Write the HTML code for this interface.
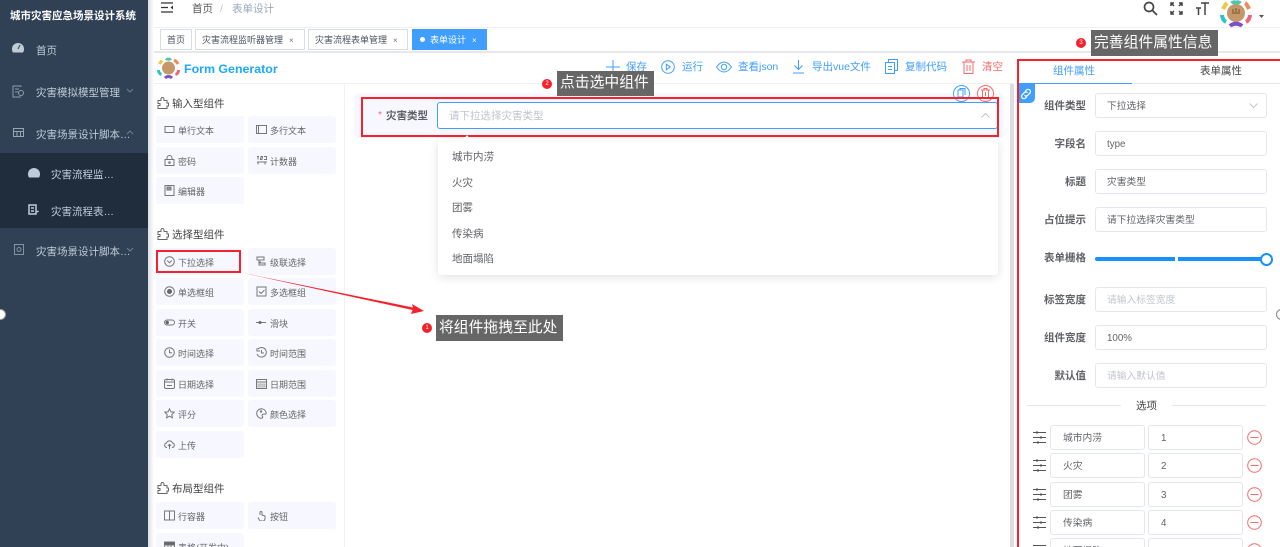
<!DOCTYPE html>
<html lang="zh">
<head>
<meta charset="utf-8">
<title>表单设计</title>
<style>
html,body{margin:0;padding:0;width:1280px;height:547px;overflow:hidden;background:#fff}
body{position:relative;font-family:"Liberation Sans","Noto Sans CJK SC",sans-serif;color:#606266}
.a,.t,svg.i{position:absolute}
.t{white-space:nowrap;line-height:16px;font-size:10.5px}
.m{color:#bfcbd9}
.it{position:absolute;width:88px;height:27px;background:#f6f7ff;border-radius:3px}
.it span{position:absolute;left:22px;top:7px;line-height:16px;font-size:9px;color:#666;white-space:nowrap}
.it svg{position:absolute;left:8px;top:8px}
.h{font-size:10.5px;color:#444}
.tag{position:absolute;top:29px;height:19px;border:1px solid #d8dce5;background:#fff;font-size:9px;line-height:21px;color:#495060;white-space:nowrap;box-sizing:content-box}
.inp{position:absolute;left:1095px;width:170px;height:23px;border:1px solid #e4e7ed;border-radius:3px;background:#fff;font-size:9.75px;line-height:25px;text-indent:11px;color:#606266;white-space:nowrap}
.ph{color:#c0c4cc}
.lab{position:absolute;width:70px;left:1016px;text-align:right;font-weight:bold;font-size:10.5px;line-height:16px;color:#606266}
.op{position:absolute;height:23px;border:1px solid #e4e7ed;border-radius:3px;font-size:9.75px;line-height:25px;text-indent:12px;color:#606266;background:#fff}
.tip{position:absolute;background:#666;color:#fff;font-size:14.8px;line-height:25px;height:25px;white-space:nowrap}
.dot{position:absolute;width:10px;height:10px;border-radius:50%;background:#f5222d;color:#fff;font-size:6px;line-height:10px;text-align:center}
.dd{position:absolute;left:452px;font-size:10.5px;line-height:16px;color:#606266}
svg{fill:none;stroke:#777;stroke-width:1}
.tb{color:#409eff;top:59px}
</style>
</head>
<body>
<!-- sidebar -->
<div class="a" style="left:0;top:0;width:148px;height:547px;background:#304156"></div>
<div class="a" style="left:0;top:153px;width:148px;height:75px;background:#1f2d3d"></div>
<div class="a" style="left:148px;top:0;width:6px;height:547px;background:linear-gradient(90deg,#dcdfe4,#fff)"></div>
<div class="t" style="left:10px;top:8px;color:#fff;font-weight:bold">城市灾害应急场景设计系统</div>
<svg class="i" style="left:12px;top:43px;stroke:none;fill:#bfcbd9" width="12" height="10" viewBox="0 0 12 10"><path d="M6 0a6 6 0 0 0-6 6c0 1.500.4 2.700 1 3.500h10c.6-.8 1-2 1-3.500a6 6 0 0 0-6-6z"/><path d="M6 6l2-4" stroke="#304156"/></svg>
<div class="t m" style="left:36px;top:43px">首页</div>
<svg class="i" style="left:12px;top:85px;stroke:#8f9cab" width="12" height="13" viewBox="0 0 12 13"><path d="M9 2V1H1v11h8M3 4h4M3 7h3"/><circle cx="9" cy="8" r="2.500"/></svg>
<div class="t m" style="left:36px;top:85px">灾害模拟模型管理</div>
<svg class="i" style="left:126px;top:88px;stroke:#6f7e90" width="8" height="5" viewBox="0 0 8 5"><path d="M1 1l3 3 3-3"/></svg>
<svg class="i" style="left:13px;top:128px;stroke:#98a5b4" width="11" height="9" viewBox="0 0 11 9"><path d="M.5.500h10v8H.5zM.5 3.500h10M4 3.500v5M7.500 3.500v5"/></svg>
<div class="t m" style="left:36px;top:127px">灾害场景设计脚本…</div>
<svg class="i" style="left:126px;top:130px;stroke:#6f7e90" width="8" height="5" viewBox="0 0 8 5"><path d="M1 4l3-3 3 3"/></svg>
<svg class="i" style="left:28px;top:168px;stroke:none;fill:#bfcbd9" width="12" height="10" viewBox="0 0 12 10"><path d="M6 0a6 6 0 0 0-6 6c0 1.500.4 2.700 1 3.500h10c.6-.8 1-2 1-3.500a6 6 0 0 0-6-6z"/></svg>
<div class="t m" style="left:51px;top:167px">灾害流程监…</div>
<svg class="i" style="left:28px;top:204px;stroke:#bfcbd9;stroke-width:1.500" width="11" height="12" viewBox="0 0 11 12"><path d="M1 1h7v9H1zM3 4h3M3 7h3M9 8l1.500-1"/></svg>
<div class="t m" style="left:51px;top:204px">灾害流程表…</div>
<svg class="i" style="left:14px;top:244px;stroke:#8492a3" width="10" height="11" viewBox="0 0 10 11"><path d="M.5.500h9v10h-9z"/><circle cx="5" cy="5.500" r="2"/></svg>
<div class="t m" style="left:36px;top:244px">灾害场景设计脚本…</div>
<svg class="i" style="left:126px;top:247px;stroke:#6f7e90" width="8" height="5" viewBox="0 0 8 5"><path d="M1 1l3 3 3-3"/></svg>
<div class="a" style="left:-5px;top:309px;width:9px;height:9px;border-radius:50%;background:#fff;border:1px solid #999"></div>

<!-- navbar -->
<svg class="i" style="left:161px;top:2px;stroke:#333;stroke-width:1.300" width="13" height="11" viewBox="0 0 13 11"><path d="M0 1h12M0 5.500h7M0 10h12"/><path d="M12 3.500v4L9.500 5.500z" fill="#333" stroke="none"/></svg>
<div class="t" style="left:192px;top:1px;color:#555">首页</div>
<div class="t" style="left:220px;top:1px;color:#c0c4cc">/</div>
<div class="t" style="left:232px;top:1px;color:#97a8be">表单设计</div>
<div class="a" style="left:154px;top:27px;width:1126px;height:1px;background:#eef0f3"></div>
<div class="a" style="left:154px;top:51px;width:1126px;height:2px;background:#e6e8ec"></div>
<div class="tag" style="left:160px;width:30px;text-align:center">首页</div>
<div class="tag" style="left:195px;width:108px;text-indent:6px">灾害流程监听器管理<span style="position:absolute;left:93px;font-size:8px;color:#777;text-indent:0">×</span></div>
<div class="tag" style="left:308px;width:98px;text-indent:6px">灾害流程表单管理<span style="position:absolute;left:84px;font-size:8px;color:#777;text-indent:0">×</span></div>
<div class="tag" style="left:412px;width:73px;background:#409eff;border-color:#409eff;color:#fff;text-indent:17px"><span style="position:absolute;left:7px;top:7px;width:5px;height:5px;border-radius:50%;background:#fff"></span>表单设计<span style="position:absolute;left:59px;font-size:8px;text-indent:0">×</span></div>

<svg class="i" style="left:1143px;top:1px;stroke:#444;stroke-width:1.700" width="15" height="15" viewBox="0 0 15 15"><circle cx="6" cy="6" r="4.500"/><path d="M9.500 9.500l4.500 4.500"/></svg>
<svg class="i" style="left:1170px;top:2px;stroke:#444;stroke-width:1.500" width="13" height="13" viewBox="0 0 13 13"><path d="M1 1l3 3M1 4V1h3M12 1L9 4M9 1h3v3M1 12l3-3M1 9v3h3M12 12L9 9M12 9v3H9"/></svg>
<svg class="i" style="left:1195px;top:2px;stroke:#444;stroke-width:1.500" width="15" height="13" viewBox="0 0 15 13"><path d="M6 1h8M10 1v12M1 6h5M3.500 6v7"/></svg>
<svg class="i" style="left:1220px;top:0;stroke-width:4" width="32" height="27" viewBox="0 0 32 27">
<circle cx="16" cy="13" r="9" fill="#c49868" stroke="none"/>
<path d="M12 1c1 2 7 2 8 0" stroke="#52c4a8"/>
<path d="M7 3C5 5 4 7 3 9" stroke="#f2c53d"/>
<path d="M25 3c2 1 3 4 4 6" stroke="#f08a5d"/>
<path d="M2 15c0 3 2 6 4 7" stroke="#2ec4c6"/>
<path d="M30 15c0 3-2 6-4 7" stroke="#ee6677"/>
<path d="M10 26c3-3 9-3 12 0" stroke="#7b52c8"/>
<path d="M12 13h8M13 9v3M16 8v4M19 9v3" stroke="#7a5230" stroke-width="1"/>
</svg>
<svg class="i" style="left:1259px;top:15px;stroke:none;fill:#555" width="6" height="4" viewBox="0 0 6 4"><path d="M0 0h5L2.500 3z"/></svg>

<!-- logo bar -->
<div class="a" style="left:154px;top:83px;width:860px;height:1px;background:#f0f1f4"></div>
<svg class="i" style="left:157px;top:57px;stroke-width:3" width="23" height="22" viewBox="0 0 23 22">
<circle cx="11.500" cy="11" r="6.500" fill="#c49868" stroke="none"/>
<path d="M9 1.500c1 1 4 1 5 0" stroke="#52c4a8"/>
<path d="M5 3.500C4 5 3 6 2.500 7" stroke="#f2c53d"/>
<path d="M17 3c2 1 3 2 4 4" stroke="#f08a5d"/>
<path d="M1.500 13c0 2 1 4 3 4.500" stroke="#2ec4c6"/>
<path d="M21.500 13c0 2-1 4-3 4.500" stroke="#ee6677"/>
<path d="M8 21c2-2 5-2 7 0" stroke="#7b52c8"/>
</svg>
<div class="t" style="left:184px;top:61px;font-size:12.4px;font-weight:bold;color:#1aa9fb">Form Generator</div>

<!-- toolbar -->
<svg class="i" style="left:606px;top:60px;stroke:#409eff" width="14" height="14" viewBox="0 0 14 14"><path d="M7 0v14M0 7h14"/></svg>
<div class="t tb" style="left:626px">保存</div>
<svg class="i" style="left:661px;top:60px;stroke:#409eff" width="14" height="14" viewBox="0 0 14 14"><circle cx="7" cy="7" r="6.300"/><path d="M5.300 4.200l4 2.800-4 2.800z"/></svg>
<div class="t tb" style="left:682px">运行</div>
<svg class="i" style="left:716px;top:60px;stroke:#409eff" width="16" height="14" viewBox="0 0 16 14"><path d="M.5 7C3 3.500 5.500 2 8 2s5 1.500 7.500 5c-2.500 3.500-5 5-7.500 5S3 10.500.5 7z"/><circle cx="8" cy="7" r="2.700"/></svg>
<div class="t tb" style="left:738px">查看json</div>
<svg class="i" style="left:792px;top:59px;stroke:#409eff" width="13" height="15" viewBox="0 0 13 15"><path d="M6.500 1v9M2.500 6.500l4 4 4-4M1 14h11"/></svg>
<div class="t tb" style="left:812px">导出vue文件</div>
<svg class="i" style="left:885px;top:59px;stroke:#409eff" width="13" height="15" viewBox="0 0 13 15"><path d="M.5 3.500h9v11h-9zM3.500 3.500V.5h9v11h-3M3 7.500h4M3 10.500h4"/></svg>
<div class="t tb" style="left:905px">复制代码</div>
<svg class="i" style="left:962px;top:59px;stroke:#f56c6c" width="13" height="15" viewBox="0 0 13 15"><path d="M0 3h13M4 3V1h5v2M2 3v11.500h9V3M5 6v6M8 6v6"/></svg>
<div class="t" style="left:982px;top:59px;color:#f56c6c">清空</div>

<!-- left panel -->
<div class="a" style="left:344px;top:84px;width:1px;height:463px;background:#f1f1f3"></div>
<svg class="i" style="left:157px;top:97px;stroke:#666" width="12" height="12" viewBox="0 0 12 12"><path d="M1 3.500h3V2a1.500 1.500 0 0 1 3 0v1.500h3V6h1.500v3H10v2.500H1V8.500h2v-2H1z"/></svg>
<div class="t h" style="left:172px;top:96px">输入型组件</div>
<svg class="i" style="left:157px;top:228px;stroke:#666" width="12" height="12" viewBox="0 0 12 12"><path d="M1 3.500h3V2a1.500 1.500 0 0 1 3 0v1.500h3V6h1.500v3H10v2.500H1V8.500h2v-2H1z"/></svg>
<div class="t h" style="left:172px;top:227px">选择型组件</div>
<svg class="i" style="left:157px;top:482px;stroke:#666" width="12" height="12" viewBox="0 0 12 12"><path d="M1 3.500h3V2a1.500 1.500 0 0 1 3 0v1.500h3V6h1.500v3H10v2.500H1V8.500h2v-2H1z"/></svg>
<div class="t h" style="left:172px;top:481px">布局型组件</div>

<div class="it" style="left:156px;top:116px"><svg width="11" height="11" viewBox="0 0 11 11"><path d="M1 2.500h9v6H1z"/></svg><span>单行文本</span></div>
<div class="it" style="left:248px;top:116px"><svg width="11" height="11" viewBox="0 0 11 11"><path d="M.5 1.500h10v8H.5zM2.500 1.500v8"/></svg><span>多行文本</span></div>
<div class="it" style="left:156px;top:147px"><svg width="11" height="11" viewBox="0 0 11 11"><path d="M1 4.500h9v6H1zM3 4.500V3a2.500 2.500 0 0 1 5 0v1.500"/><circle cx="5.500" cy="7.500" r=".8"/></svg><span>密码</span></div>
<div class="it" style="left:248px;top:147px"><svg width="11" height="11" viewBox="0 0 11 11"><path d="M1 1.500h2M2 1.500v3M4.500 1.500h2v1.500h-2v1.500h2M8 1.500h2.500V4.500H8M1 7h10M2 7v2.500M9 7v2.500"/></svg><span>计数器</span></div>
<div class="it" style="left:156px;top:177px"><svg width="11" height="11" viewBox="0 0 11 11"><path d="M1 .5h9v10H1z"/><path d="M3 2h4v3H3z" fill="#999"/></svg><span>编辑器</span></div>

<div class="it" style="left:156px;top:248px"><svg width="11" height="11" viewBox="0 0 11 11"><circle cx="5.500" cy="5.500" r="4.800"/><path d="M3.200 4.500l2.300 2.300 2.300-2.300"/></svg><span>下拉选择</span></div>
<div class="it" style="left:248px;top:248px"><svg width="11" height="11" viewBox="0 0 11 11"><path d="M1 1h7v3H1zM3 4v5h6v-2H3M3 6h2"/></svg><span>级联选择</span></div>
<div class="it" style="left:156px;top:278px"><svg width="11" height="11" viewBox="0 0 11 11"><circle cx="5.500" cy="5.500" r="4.800"/><circle cx="5.500" cy="5.500" r="2.500" fill="#666" stroke="none"/></svg><span>单选框组</span></div>
<div class="it" style="left:248px;top:278px"><svg width="11" height="11" viewBox="0 0 11 11"><path d="M1 1h9v9H1zM3 5.500l2 2 3.500-3.500"/></svg><span>多选框组</span></div>
<div class="it" style="left:156px;top:309px"><svg width="11" height="11" viewBox="0 0 11 11"><rect x=".5" y="3" width="10" height="5" rx="2.500"/><circle cx="3.200" cy="5.500" r="1.700" fill="#666" stroke="none"/></svg><span>开关</span></div>
<div class="it" style="left:248px;top:309px"><svg width="11" height="11" viewBox="0 0 11 11"><path d="M0 5.500h10"/><circle cx="4" cy="5.500" r="1.500" fill="#666" stroke="none"/></svg><span>滑块</span></div>
<div class="it" style="left:156px;top:339px"><svg width="11" height="11" viewBox="0 0 11 11"><circle cx="5.500" cy="5.500" r="4.800"/><path d="M5.500 2.500v3.300h2.500"/></svg><span>时间选择</span></div>
<div class="it" style="left:248px;top:339px"><svg width="11" height="11" viewBox="0 0 11 11"><path d="M2 2a4.800 4.800 0 1 1-1 5M1 1v3h3M5.500 3v3H8"/></svg><span>时间范围</span></div>
<div class="it" style="left:156px;top:370px"><svg width="11" height="11" viewBox="0 0 11 11"><rect x=".5" y="1.500" width="10" height="9" rx="1.500"/><path d="M.5 4h10M3 .5v2M8 .5v2M3 7.500h5"/></svg><span>日期选择</span></div>
<div class="it" style="left:248px;top:370px"><svg width="11" height="11" viewBox="0 0 11 11" stroke="#aaa"><path d="M.5 1.500h10v9H.5zM.5 4h10"/><path d="M2 6h7v3H2z" fill="#ccc" stroke="#bbb"/></svg><span>日期范围</span></div>
<div class="it" style="left:156px;top:400px"><svg width="11" height="11" viewBox="0 0 11 11"><path d="M5.500.8l1.400 3 3.300.4-2.400 2.300.6 3.300-2.900-1.600-2.900 1.600.6-3.300L.8 4.200l3.300-.4z"/></svg><span>评分</span></div>
<div class="it" style="left:248px;top:400px"><svg width="11" height="11" viewBox="0 0 11 11"><path d="M5.500.7a4.800 4.800 0 1 0 0 9.600c1.500 0 1.500-1.500.8-2.200-.8-1 0-2 1-2h2.200c.8 0 .8-1 .5-1.800A4.800 4.800 0 0 0 5.500.7z"/><circle cx="5" cy="3.500" r=".7"/></svg><span>颜色选择</span></div>
<div class="it" style="left:156px;top:431px"><svg width="11" height="11" viewBox="0 0 11 11"><path d="M3 8.500H2.500a2.300 2.300 0 0 1 0-4.500 3.200 3.200 0 0 1 6 0 2.300 2.300 0 0 1 0 4.500H8M5.500 10V5.500M3.800 7l1.700-1.700L7.200 7"/></svg><span>上传</span></div>
<div class="it" style="left:156px;top:502px"><svg width="11" height="11" viewBox="0 0 11 11"><path d="M.5 1h10v9H.5zM5.500 1v9"/></svg><span>行容器</span></div>
<div class="it" style="left:248px;top:502px"><svg width="11" height="11" viewBox="0 0 11 11" stroke="#888"><path d="M4 5V2.500a1 1 0 0 1 2 0V5l3 1v3l-1 2H4L2 7.500"/></svg><span>按钮</span></div>
<div class="it" style="left:156px;top:533px"><svg width="11" height="11" viewBox="0 0 11 11"><path d="M0 1h11v3H0z" fill="#666"/><path d="M.5 4v7M10.500 4v7M0 7h11M4 4v7M7 4v7"/></svg><span>表格(开发中)</span></div>

<!-- center -->
<div class="a" style="left:354px;top:93px;width:650px;height:45px;background:#f6f7ff;border-radius:5px"></div>
<div class="a" style="left:1010px;top:84px;width:4px;height:463px;background:#dcdde1"></div>
<div class="a" style="left:437px;top:102px;width:559px;height:25px;background:#fff;border:1px solid #409eff;border-radius:3px"></div>
<div class="t" style="left:378px;top:108px;color:#f56c6c;font-size:10px">*</div>
<div class="t" style="left:386px;top:108px;font-weight:bold">灾害类型</div>
<div class="t" style="left:449px;top:108px;color:#c0c4cc">请下拉选择灾害类型</div>
<svg class="i" style="left:981px;top:113px;stroke:#c0c4cc" width="9" height="5" viewBox="0 0 9 5"><path d="M.5 4.500l4-4 4 4"/></svg>
<div class="a" style="left:953px;top:85px;width:15px;height:15px;border:1px solid #409eff;border-radius:50%;background:#fff"></div>
<svg class="i" style="left:957px;top:88px;stroke:#409eff" width="9" height="10" viewBox="0 0 9 10"><path d="M1 2h5v7H1zM3 2V.5h5V7"/></svg>
<div class="a" style="left:977px;top:85px;width:15px;height:15px;border:1px solid #f56c6c;border-radius:50%;background:#fff"></div>
<svg class="i" style="left:981px;top:88px;stroke:#f56c6c" width="9" height="10" viewBox="0 0 9 10"><path d="M0 2h9M3 2V.5h3V2M1.500 2v7.500h6V2M4.500 4v4"/></svg>
<div class="a" style="left:361px;top:97px;width:634px;height:36px;border:2px solid #f5222d"></div>

<div class="a" style="left:438px;top:139px;width:560px;height:136px;background:#fff;border-radius:3px;box-shadow:0 2px 10px rgba(0,0,0,.12)"></div>
<div class="a" style="left:463px;top:135px;width:0;height:0;border:4px solid transparent;border-top:0;border-bottom:5px solid #fff"></div>
<div class="dd" style="top:149px">城市内涝</div>
<div class="dd" style="top:175px">火灾</div>
<div class="dd" style="top:200px">团雾</div>
<div class="dd" style="top:226px">传染病</div>
<div class="dd" style="top:251px">地面塌陷</div>

<!-- annotations -->
<div class="a" style="left:156px;top:250px;width:81px;height:19px;border:2px solid #f5222d"></div>
<svg class="i" style="left:240px;top:270px;stroke:none" width="190" height="45" viewBox="0 0 190 45"><path d="M3 3L173 37.500 172 34 184 41 171 44 172.500 40z" fill="#f5222d"/></svg>
<div class="dot" style="left:422px;top:323px">1</div>
<div class="tip" style="left:436px;top:315px;width:127px;height:26px;line-height:26px;text-indent:3px">将组件拖拽至此处</div>
<div class="dot" style="left:542px;top:79px">2</div>
<div class="tip" style="left:557px;top:71px;width:97px;text-indent:3px">点击选中组件</div>
<div class="dot" style="left:1076px;top:38px">3</div>
<div class="tip" style="left:1091px;top:30px;width:127px;height:26px;line-height:26px;text-indent:3px">完善组件属性信息</div>

<!-- right panel -->
<div class="t" style="left:1053px;top:63px;color:#409eff">组件属性</div>
<div class="t" style="left:1200px;top:63px;color:#444">表单属性</div>
<div class="a" style="left:1018px;top:83px;width:262px;height:1px;background:#e4e7ed"></div>
<div class="a" style="left:1018px;top:83px;width:114px;height:1px;background:#409eff"></div>
<div class="a" style="left:1018px;top:84px;width:17px;height:19px;background:#409eff;border-radius:0 0 5px 0"></div>
<svg class="i" style="left:1020px;top:88px;stroke:#fff;stroke-width:1.200" width="12" height="12" viewBox="0 0 12 12"><path d="M5 3.500l1.500-1.500a2.200 2.200 0 0 1 3.300 3.200L7.700 7.300a2.200 2.200 0 0 1-3.200 0M7 8.500L5.500 10a2.200 2.200 0 0 1-3.300-3.200l2.100-2.100a2.200 2.200 0 0 1 3.200 0"/></svg>

<div class="lab" style="top:98px">组件类型</div>
<div class="inp" style="top:93px">下拉选择</div>
<svg class="i" style="left:1249px;top:103px;stroke:#c0c4cc" width="9" height="5" viewBox="0 0 9 5"><path d="M.5.500l4 4 4-4"/></svg>
<div class="lab" style="top:136px">字段名</div>
<div class="inp" style="top:131px">type</div>
<div class="lab" style="top:174px">标题</div>
<div class="inp" style="top:169px">灾害类型</div>
<div class="lab" style="top:212px">占位提示</div>
<div class="inp" style="top:207px">请下拉选择灾害类型</div>
<div class="lab" style="top:250px">表单栅格</div>
<div class="a" style="left:1095px;top:257px;width:171px;height:4px;border-radius:2px;background:#1890ff"></div>
<div class="a" style="left:1175px;top:257px;width:3px;height:4px;background:#fff"></div>
<div class="a" style="left:1260px;top:253px;width:9px;height:9px;border:2px solid #1890ff;border-radius:50%;background:#fff"></div>
<div class="lab" style="top:292px">标签宽度</div>
<div class="inp ph" style="top:287px">请输入标签宽度</div>
<div class="lab" style="top:330px">组件宽度</div>
<div class="inp" style="top:325px">100%</div>
<div class="lab" style="top:368px">默认值</div>
<div class="inp ph" style="top:363px">请输入默认值</div>
<div class="a" style="left:1027px;top:405px;width:94px;height:1px;background:#e4e7ed"></div>
<div class="a" style="left:1172px;top:405px;width:94px;height:1px;background:#e4e7ed"></div>
<div class="t" style="left:1136px;top:398px;color:#444">选项</div>

<svg class="i" style="left:1033px;top:431px;stroke:#555" width="13" height="13" viewBox="0 0 13 13"><path d="M0 1.500h13M0 6.500h13M0 11.500h13"/><path d="M4 .5v2M8 5.500v2M5 10.500v2" stroke-width="2"/></svg>
<div class="op" style="left:1050px;top:425px;width:93px">城市内涝</div>
<div class="op" style="left:1148px;top:425px;width:93px">1</div>
<svg class="i" style="left:1247px;top:430px;stroke:#f56c6c" width="15" height="15" viewBox="0 0 15 15"><circle cx="7.500" cy="7.500" r="6.800"/><path d="M3.500 7.500h8"/></svg>

<svg class="i" style="left:1033px;top:459px;stroke:#555" width="13" height="13" viewBox="0 0 13 13"><path d="M0 1.500h13M0 6.500h13M0 11.500h13"/><path d="M4 .5v2M8 5.500v2M5 10.500v2" stroke-width="2"/></svg>
<div class="op" style="left:1050px;top:453px;width:93px">火灾</div>
<div class="op" style="left:1148px;top:453px;width:93px">2</div>
<svg class="i" style="left:1247px;top:458px;stroke:#f56c6c" width="15" height="15" viewBox="0 0 15 15"><circle cx="7.500" cy="7.500" r="6.800"/><path d="M3.500 7.500h8"/></svg>

<svg class="i" style="left:1033px;top:488px;stroke:#555" width="13" height="13" viewBox="0 0 13 13"><path d="M0 1.500h13M0 6.500h13M0 11.500h13"/><path d="M4 .5v2M8 5.500v2M5 10.500v2" stroke-width="2"/></svg>
<div class="op" style="left:1050px;top:482px;width:93px">团雾</div>
<div class="op" style="left:1148px;top:482px;width:93px">3</div>
<svg class="i" style="left:1247px;top:487px;stroke:#f56c6c" width="15" height="15" viewBox="0 0 15 15"><circle cx="7.500" cy="7.500" r="6.800"/><path d="M3.500 7.500h8"/></svg>

<svg class="i" style="left:1033px;top:516px;stroke:#555" width="13" height="13" viewBox="0 0 13 13"><path d="M0 1.500h13M0 6.500h13M0 11.500h13"/><path d="M4 .5v2M8 5.500v2M5 10.500v2" stroke-width="2"/></svg>
<div class="op" style="left:1050px;top:510px;width:93px">传染病</div>
<div class="op" style="left:1148px;top:510px;width:93px">4</div>
<svg class="i" style="left:1247px;top:515px;stroke:#f56c6c" width="15" height="15" viewBox="0 0 15 15"><circle cx="7.500" cy="7.500" r="6.800"/><path d="M3.500 7.500h8"/></svg>

<svg class="i" style="left:1033px;top:544px;stroke:#555" width="13" height="13" viewBox="0 0 13 13"><path d="M0 1.500h13M0 6.500h13"/></svg>
<div class="op" style="left:1050px;top:538px;width:93px">地面塌陷</div>
<div class="op" style="left:1148px;top:538px;width:93px">5</div>
<svg class="i" style="left:1247px;top:543px;stroke:#f56c6c" width="15" height="15" viewBox="0 0 15 15"><circle cx="7.500" cy="7.500" r="6.800"/></svg>

<div class="a" style="left:1017px;top:59px;width:261px;height:488px;border:2px solid #f5222d;border-bottom:0"></div>
<div class="a" style="left:1276px;top:309px;width:9px;height:9px;border-radius:50%;background:#fff;border:1px solid #888"></div>
</body>
</html>
